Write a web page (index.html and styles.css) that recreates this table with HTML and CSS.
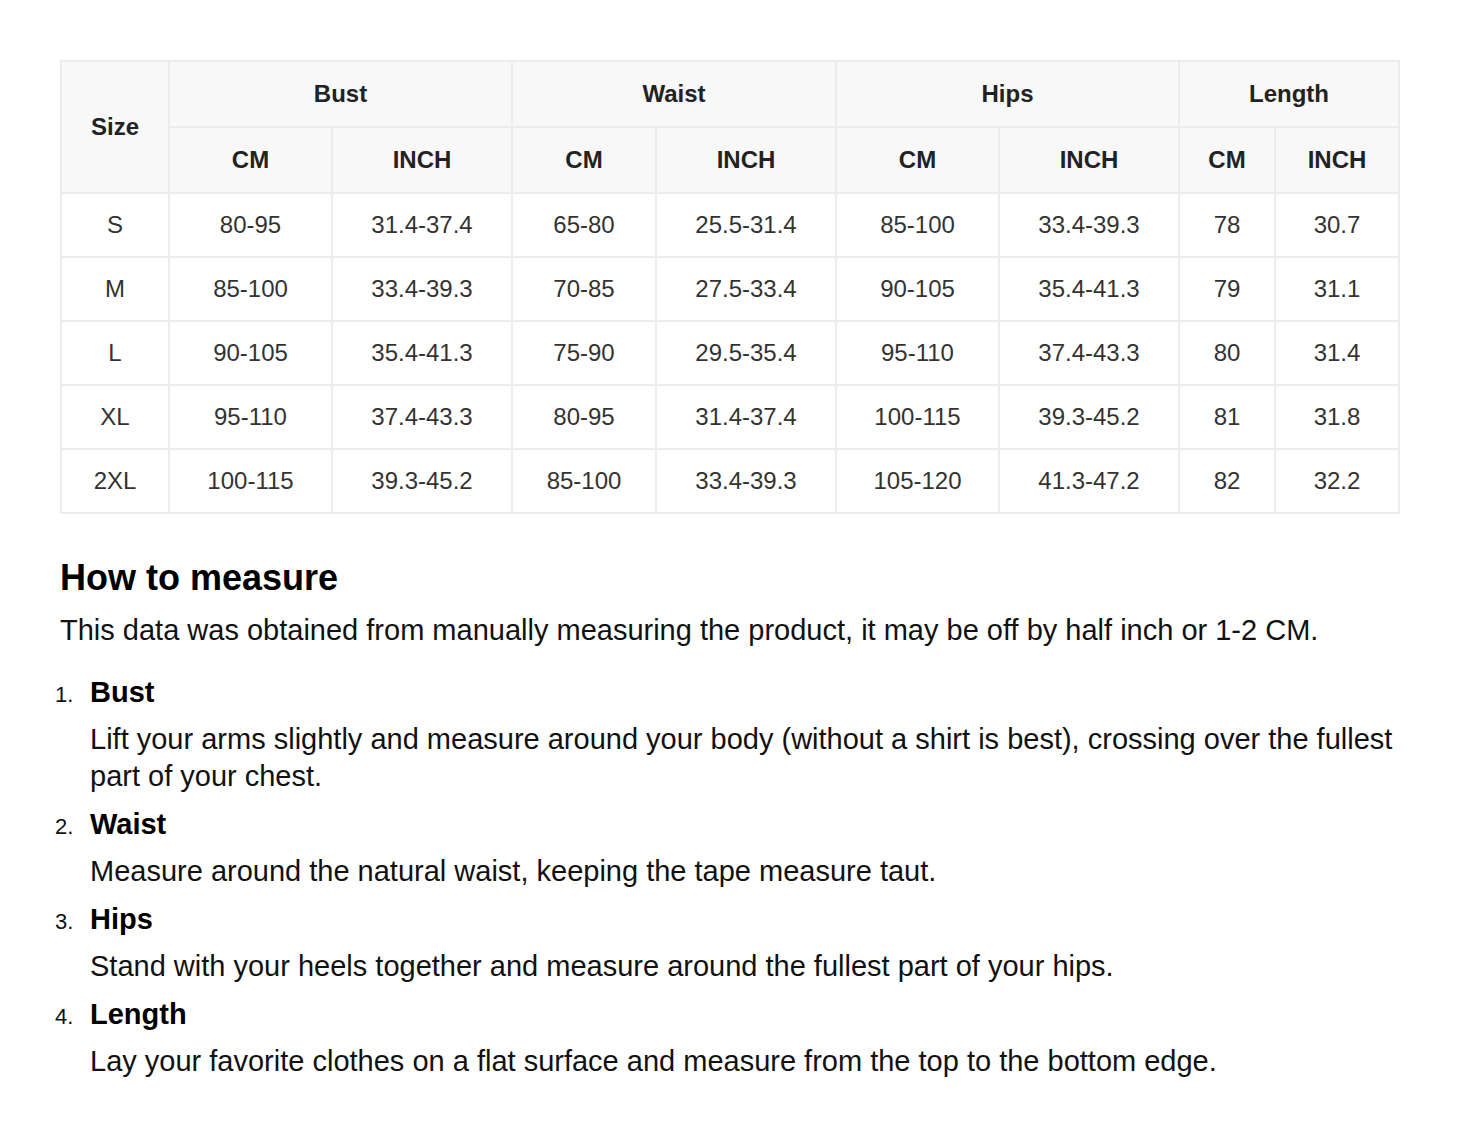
FILE: index.html
```html
<!DOCTYPE html>
<html lang="en">
<head>
<meta charset="utf-8">
<title>Size chart</title>
<link rel="stylesheet" href="styles.css">
</head>
<body>
<main class="page">
  <table class="size-table">
    <colgroup>
      <col class="c-size">
      <col class="c-w163"><col class="c-w180">
      <col class="c-w144"><col class="c-w180">
      <col class="c-w163"><col class="c-w180">
      <col class="c-w96"><col class="c-w124">
    </colgroup>
    <thead>
      <tr>
        <th rowspan="2">Size</th>
        <th colspan="2">Bust</th>
        <th colspan="2">Waist</th>
        <th colspan="2">Hips</th>
        <th colspan="2">Length</th>
      </tr>
      <tr>
        <th>CM</th><th>INCH</th>
        <th>CM</th><th>INCH</th>
        <th>CM</th><th>INCH</th>
        <th>CM</th><th>INCH</th>
      </tr>
    </thead>
    <tbody>
      <tr><td>S</td><td>80-95</td><td>31.4-37.4</td><td>65-80</td><td>25.5-31.4</td><td>85-100</td><td>33.4-39.3</td><td>78</td><td>30.7</td></tr>
      <tr><td>M</td><td>85-100</td><td>33.4-39.3</td><td>70-85</td><td>27.5-33.4</td><td>90-105</td><td>35.4-41.3</td><td>79</td><td>31.1</td></tr>
      <tr><td>L</td><td>90-105</td><td>35.4-41.3</td><td>75-90</td><td>29.5-35.4</td><td>95-110</td><td>37.4-43.3</td><td>80</td><td>31.4</td></tr>
      <tr><td>XL</td><td>95-110</td><td>37.4-43.3</td><td>80-95</td><td>31.4-37.4</td><td>100-115</td><td>39.3-45.2</td><td>81</td><td>31.8</td></tr>
      <tr><td>2XL</td><td>100-115</td><td>39.3-45.2</td><td>85-100</td><td>33.4-39.3</td><td>105-120</td><td>41.3-47.2</td><td>82</td><td>32.2</td></tr>
    </tbody>
  </table>

  <section class="measure">
    <h2 class="measure-title">How to measure</h2>
    <p class="measure-intro">This data was obtained from manually measuring the product, it may be off by half inch or 1-2 CM.</p>
    <ol class="measure-list">
      <li class="measure-item">
        <strong class="item-title">Bust</strong>
        <p class="item-desc">Lift your arms slightly and measure around your body (without a shirt is best), crossing over the fullest part of your chest.</p>
      </li>
      <li class="measure-item">
        <strong class="item-title">Waist</strong>
        <p class="item-desc">Measure around the natural waist, keeping the tape measure taut.</p>
      </li>
      <li class="measure-item">
        <strong class="item-title">Hips</strong>
        <p class="item-desc">Stand with your heels together and measure around the fullest part of your hips.</p>
      </li>
      <li class="measure-item">
        <strong class="item-title">Length</strong>
        <p class="item-desc">Lay your favorite clothes on a flat surface and measure from the top to the bottom edge.</p>
      </li>
    </ol>
  </section>
</main>
</body>
</html>
```

FILE: styles.css
```css
html, body {
  margin: 0;
  padding: 0;
  background: #ffffff;
}

body {
  font-family: "Liberation Sans", Arial, sans-serif;
  color: #111111;
}

.page {
  padding: 60px 60px 40px 60px;
}

.size-table {
  width: 1340px;
  border-collapse: collapse;
  table-layout: fixed;
  border: 2px solid #ececec;
}

.c-size { width: 108px; }
.c-w163 { width: 163px; }
.c-w180 { width: 180px; }
.c-w144 { width: 144px; }
.c-w96 { width: 96px; }
.c-w124 { width: 124px; }

.size-table th,
.size-table td {
  border: 2px solid #ececec;
  text-align: center;
  vertical-align: middle;
  padding: 0;
}

.size-table th {
  height: 64px;
  background: #f8f8f8;
  color: #222222;
  font-weight: bold;
  font-size: 24px;
}

.size-table td {
  height: 62px;
  background: #ffffff;
  color: #333333;
  font-size: 24px;
}

.measure {
  margin-top: 38px;
}

.measure-title {
  margin: 0;
  font-size: 36px;
  line-height: 52px;
  font-weight: bold;
  color: #000000;
}

.measure-intro {
  margin: 0;
  font-size: 29px;
  line-height: 52px;
  color: #111111;
}

.measure-list {
  margin: 18px 0 0 0;
  padding: 0 0 0 30px;
  font-size: 29px;
}

.measure-list li::marker {
  content: counter(list-item) ".\00a0\00a0\2009";
  font-size: 22px;
  color: #111111;
}

.measure-item {
  margin-bottom: 11px;
}

.item-title {
  display: block;
  font-size: 29px;
  line-height: 37px;
  font-weight: bold;
  color: #000000;
}

.item-desc {
  margin: 10px 0 0 0;
  font-size: 29px;
  line-height: 37px;
  color: #111111;
}
```
